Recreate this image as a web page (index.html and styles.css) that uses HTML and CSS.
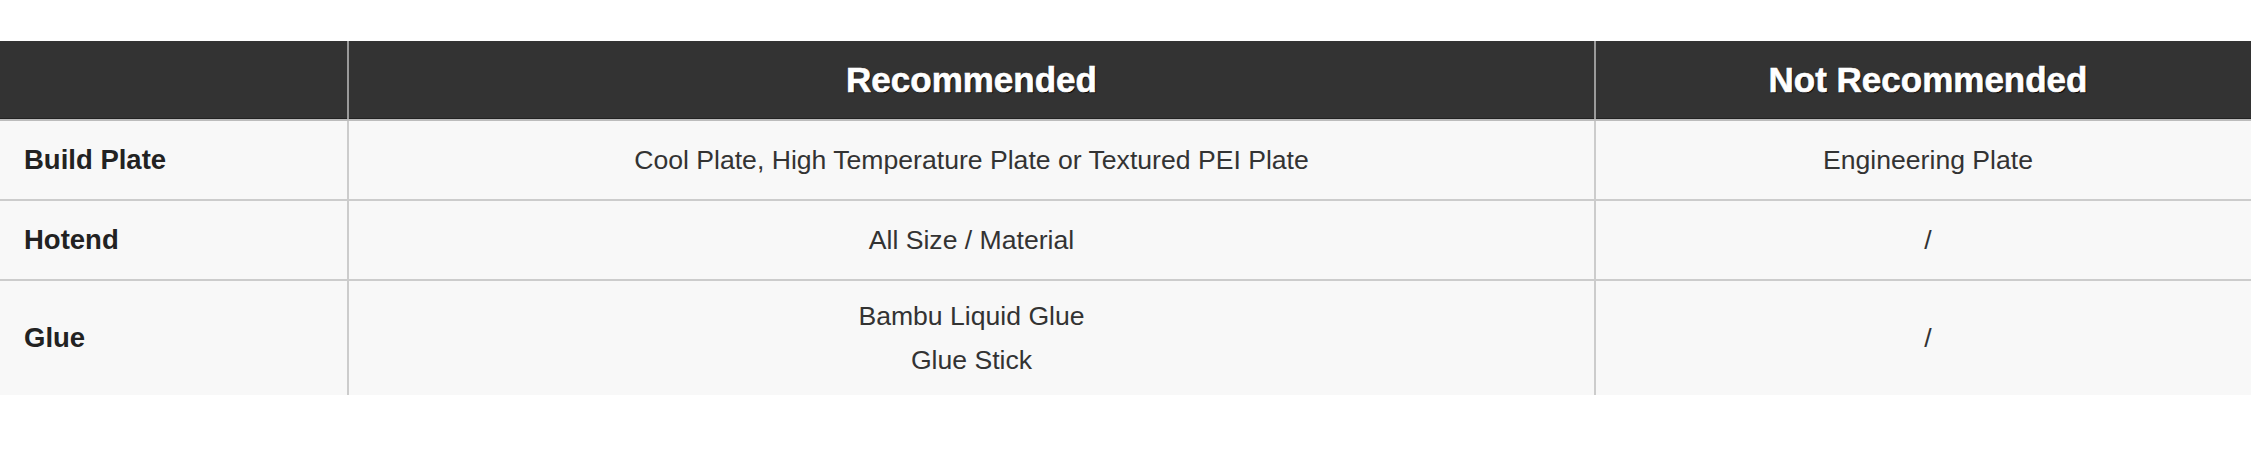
FILE: index.html
```html
<!DOCTYPE html>
<html lang="en">

<head>
    <meta charset="UTF-8">
    <meta name="viewport" content="width=device-width, initial-scale=1.0">
    <title>Plate Compatibility</title>
    <link rel="stylesheet" href="styles.css">
</head>

<body>
    <table class="compat-table">
        <thead>
            <tr>
                <th class="col-label"></th>
                <th class="col-rec">Recommended</th>
                <th class="col-not">Not Recommended</th>
            </tr>
        </thead>
        <tbody>
            <tr class="row-plate">
                <td class="label">Build Plate</td>
                <td>Cool Plate, High Temperature Plate or Textured PEI Plate</td>
                <td class="not">Engineering Plate</td>
            </tr>
            <tr class="row-hotend">
                <td class="label">Hotend</td>
                <td>All Size / Material</td>
                <td class="not">/</td>
            </tr>
            <tr class="row-glue">
                <td class="label">Glue</td>
                <td class="multi">Bambu Liquid Glue<br>Glue Stick</td>
                <td class="not">/</td>
            </tr>
        </tbody>
    </table>
</body>

</html>
```

FILE: styles.css
```css
body {
    margin: 0;
    padding: 41px 0 0;
    background-color: #fff;
    font-family: 'Liberation Sans', Arial, sans-serif;
}

.compat-table {
    width: 100%;
    border-collapse: collapse;
    table-layout: fixed;
}

.compat-table th.col-label {
    width: 347px;
}

.compat-table th.col-not {
    width: 646px;
    padding-left: 9px;
}

.compat-table th {
    height: 78px;
    padding: 0;
    background-color: #333;
    color: #fff;
    font-size: 35px;
    font-weight: bold;
    -webkit-text-stroke: 0.6px #fff;
    text-shadow: 1px 1px 1px #000;
    border-bottom: 2px solid #bcbcbc;
    box-shadow: inset 0 -1px 0 #222;
}

.compat-table th + th {
    border-left: 2px solid #9a9a9a;
}

.compat-table td {
    padding: 0 10px;
    background-color: #f8f8f8;
    color: #333;
    font-size: 26.6px;
    text-align: center;
    vertical-align: middle;
}

.compat-table td.not {
    padding-left: 19px;
}

.compat-table td + td {
    border-left: 2px solid #ccc;
}

.compat-table tbody tr + tr td {
    border-top: 2px solid #ccc;
}

.compat-table td.label {
    padding-left: 24px;
    text-align: left;
    font-size: 27.5px;
    font-weight: bold;
    color: #222;
}

.row-plate td,
.row-hotend td {
    height: 78px;
}

.row-glue td {
    height: 114px;
}

.multi {
    line-height: 44px;
}
```
